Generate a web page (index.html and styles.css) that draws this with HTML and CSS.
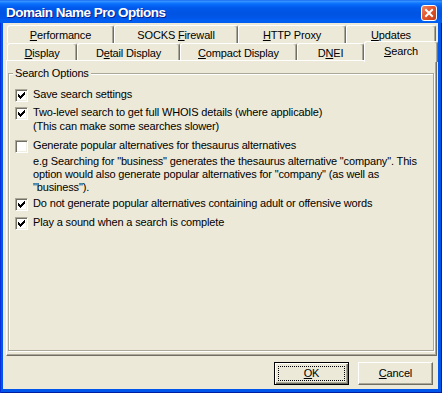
FILE: index.html
```html
<!DOCTYPE html>
<html>
<head>
<meta charset="utf-8">
<title>Domain Name Pro Options</title>
<link rel="stylesheet" href="styles.css">
</head>
<body>
<div class="window">
  <div class="titlebar">
    <span class="title">Domain Name Pro Options</span>
    <span class="close" aria-label="Close">
      <svg width="14" height="14" viewBox="0 0 14 14"><path d="M4 4 L10 10 M10 4 L4 10" stroke="#fff" stroke-width="2" stroke-linecap="square"/></svg>
    </span>
  </div>
  <div class="client">
    <div class="tabs">
      <div class="tab-row row1">
        <div class="tab t-perf"><u>P</u>erformance</div>
        <div class="tab t-socks">SOCKS <u>F</u>irewall</div>
        <div class="tab t-http"><u>H</u>TTP Proxy</div>
        <div class="tab t-upd"><u>U</u>pdates</div>
      </div>
      <div class="tab-row row2">
        <div class="tab t-disp"><u>D</u>isplay</div>
        <div class="tab t-detail">D<u>e</u>tail Display</div>
        <div class="tab t-compact"><u>C</u>ompact Display</div>
        <div class="tab t-dnei">D<u>N</u>EI</div>
        <div class="tab t-search selected"><u>S</u>earch</div>
      </div>
    </div>
    <div class="panel">
      <div class="group">
        <span class="group-label">Search Options</span>
        <div class="opt">
          <span class="cb"><svg class="check" width="11" height="11" viewBox="0 0 11 11"><path d="M8 2h1v1h-1z M7 3h2v1h-2z M2 4h1v1h-1z M6 4h3v1h-3z M2 5h2v1h-2z M5 5h3v1h-3z M2 6h5v1h-5z M3 7h3v1h-3z M4 8h1v1h-1z" fill="#000"/></svg></span>
          <div class="opt-label">Save search settings</div>
        </div>
        <div class="opt">
          <span class="cb"><svg class="check" width="11" height="11" viewBox="0 0 11 11"><path d="M8 2h1v1h-1z M7 3h2v1h-2z M2 4h1v1h-1z M6 4h3v1h-3z M2 5h2v1h-2z M5 5h3v1h-3z M2 6h5v1h-5z M3 7h3v1h-3z M4 8h1v1h-1z" fill="#000"/></svg></span>
          <div class="opt-label">
            <div>Two-level search to get full WHOIS details (where applicable)</div>
            <div class="note">(This can make some searches slower)</div>
          </div>
        </div>
        <div class="opt gen">
          <span class="cb"></span>
          <div class="opt-label">
            <div>Generate popular alternatives for thesaurus alternatives</div>
            <p class="desc">e.g Searching for "business" generates the thesaurus alternative "company". This option would also generate popular alternatives for "company" (as well as "business").</p>
          </div>
        </div>
        <div class="opt adult">
          <span class="cb"><svg class="check" width="11" height="11" viewBox="0 0 11 11"><path d="M8 2h1v1h-1z M7 3h2v1h-2z M2 4h1v1h-1z M6 4h3v1h-3z M2 5h2v1h-2z M5 5h3v1h-3z M2 6h5v1h-5z M3 7h3v1h-3z M4 8h1v1h-1z" fill="#000"/></svg></span>
          <div class="opt-label">Do not generate popular alternatives containing adult or offensive words</div>
        </div>
        <div class="opt sound">
          <span class="cb"><svg class="check" width="11" height="11" viewBox="0 0 11 11"><path d="M8 2h1v1h-1z M7 3h2v1h-2z M2 4h1v1h-1z M6 4h3v1h-3z M2 5h2v1h-2z M5 5h3v1h-3z M2 6h5v1h-5z M3 7h3v1h-3z M4 8h1v1h-1z" fill="#000"/></svg></span>
          <div class="opt-label">Play a sound when a search is complete</div>
        </div>
      </div>
    </div>
    <div class="footer">
      <button class="btn default"><span class="focus"><u>O</u>K</span></button>
      <button class="btn"><span class="btn-text"><u>C</u>ancel</span></button>
    </div>
  </div>
</div>
</body>
</html>
```
FILE: styles.css
```css
* { box-sizing: border-box; }
html, body { margin: 0; padding: 0; }
body {
  width: 442px;
  height: 393px;
  overflow: hidden;
  font-family: "Liberation Sans", Arial, sans-serif;
  font-size: 11px;
  line-height: 13px;
  letter-spacing: -0.15px;
  color: #000;
}
u { text-decoration: underline; text-underline-offset: 1px; }

.window {
  width: 442px;
  height: 393px;
  display: flex;
  flex-direction: column;
  background: #0055EA;
  box-shadow: inset 1px 0 #0831D9, inset -1px 0 #001EA0, inset 0 -1px #001EA0;
}

.titlebar {
  height: 23px;
  flex: none;
  display: flex;
  align-items: flex-start;
  padding: 0 5px 0 6px;
  background: linear-gradient(to bottom,
    #0A5FEB 0px, #3D95FF 1px, #2A8BFF 2px, #1278FF 3px, #0668F8 5px,
    #0059EC 8px, #0054E3 13px, #0056E8 18px, #0060F4 21px, #005AEE 23px);
}
.title {
  padding-top: 5px;
  color: #fff;
  font-weight: bold;
  font-size: 13.5px;
  line-height: 16px;
  letter-spacing: -0.5px;
  text-shadow: 1px 1px #0A1E8C;
}
.close {
  margin-left: auto;
  margin-top: 5px;
  width: 16px;
  height: 16px;
  border: 1px solid #fff;
  border-radius: 3px;
  background: linear-gradient(135deg, #F08A64 0%, #E3552D 45%, #C53E16 100%);
  display: flex;
  align-items: center;
  justify-content: center;
}
.close svg { display: block; }

.client {
  flex: 1;
  margin: 0 4px 4px 3px;
  background: #ECE9D8;
  display: flex;
  flex-direction: column;
}

.tabs {
  flex: none;
  padding: 2px 0 0 4px;
}
.tab-row { display: flex; }
.row1 { height: 18px; }
.row2 { height: 17px; }
.tab {
  height: 100%;
  border-top: 1px solid #fff;
  border-left: 1px solid #fff;
  border-right: 1px solid #716F64;
  border-radius: 3px 3px 0 0;
  box-shadow: inset -1px 0 #ACA899;
  background: #ECE9D8;
  text-align: center;
  padding-top: 3px;
  white-space: nowrap;
}
.t-perf { width: 107px; }
.t-socks { width: 124px; }
.t-http { width: 108px; }
.t-upd { width: 90px; }
.t-disp { width: 70px; }
.t-detail { width: 103px; }
.t-compact { width: 117px; }
.t-dnei { width: 67px; }
.t-search { width: 74px; }
.tab.selected {
  position: relative;
  z-index: 1;
  height: 21px;
  margin-top: -2px;
  padding-top: 3px;
}

.panel {
  flex: 1;
  margin: 0 1px 0 3px;
  border-top: 1px solid #fff;
  border-left: 1px solid #fff;
  border-right: 1px solid #716F64;
  border-bottom: 1px solid #716F64;
  box-shadow: inset -1px -1px #ACA899;
  display: flex;
  flex-direction: column;
}

.group {
  flex: 1;
  position: relative;
  margin: 12px 2px 4px 1px;
  border: 1px solid #ACA899;
  box-shadow: 1px 1px #fff, inset 1px 1px #fff;
  padding: 14px 2px 0 6px;
}
.group-label {
  position: absolute;
  top: -7px;
  left: 4px;
  padding: 0 2px;
  background: #ECE9D8;
}

.opt {
  display: flex;
  align-items: flex-start;
  gap: 5px;
  margin-top: 4px;
}
.opt:first-of-type { margin-top: 0; }
.opt.gen { margin-top: 6px; }
.opt.adult { margin-top: 3px; }
.opt.sound { margin-top: 5px; }
.opt-label { flex: 1; }
.note { margin-top: 1px; }
.desc { margin: 3px 0 0 0; }

.cb {
  flex: none;
  width: 13px;
  height: 13px;
  margin-top: 1px;
  background: #fff;
  border: 1px solid;
  border-color: #ACA899 #fff #fff #ACA899;
  box-shadow: inset 1px 1px #716F64, inset -1px -1px #F1EFE2;
}
.check { display: block; shape-rendering: crispEdges; }

.footer {
  height: 33px;
  flex: none;
  display: flex;
  justify-content: flex-end;
  align-items: flex-start;
  gap: 9px;
  padding: 6px 5px 0 0;
}
.btn {
  width: 75px;
  height: 23px;
  margin: 0;
  padding: 0;
  background: #ECE9D8;
  border: 1px solid;
  border-color: #fff #716F64 #716F64 #fff;
  box-shadow: inset -1px -1px #ACA899;
  font: inherit;
  letter-spacing: inherit;
  color: #000;
  display: flex;
  align-items: center;
  justify-content: center;
}
.btn.default {
  border: 1px solid #000;
  box-shadow: inset 1px 1px #fff, inset -1px -1px #716F64, inset -2px -2px #ACA899;
  padding: 3px;
}
.focus {
  flex: 1;
  align-self: stretch;
  border: 1px dotted #000;
  display: flex;
  align-items: center;
  justify-content: center;
}
```
